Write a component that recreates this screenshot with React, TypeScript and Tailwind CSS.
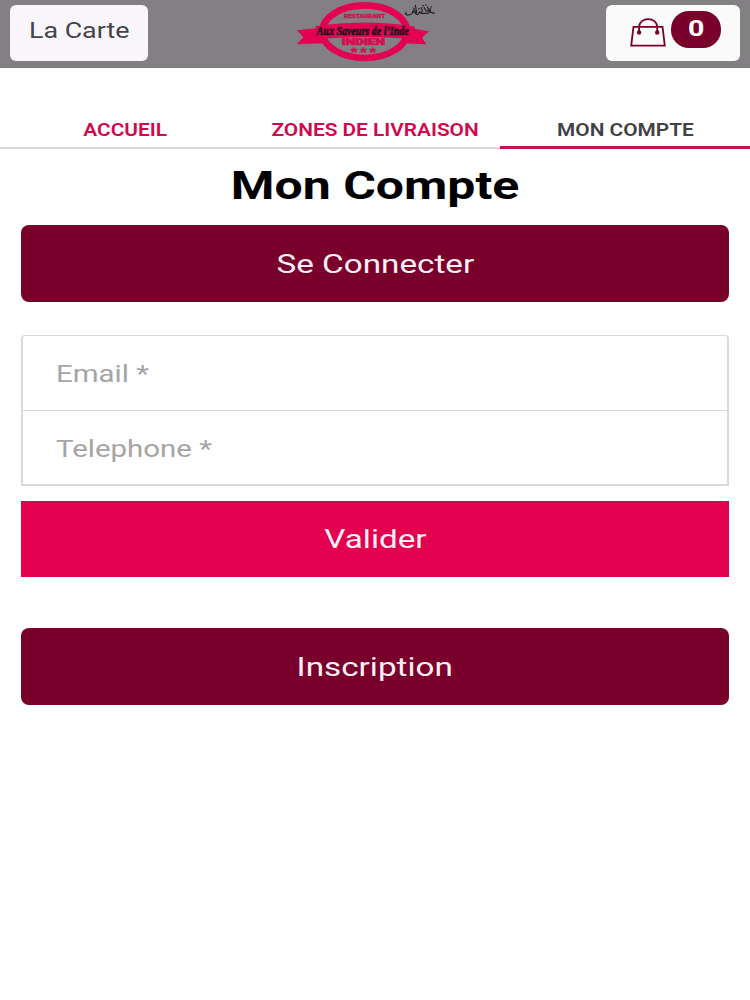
const tabs = [
  { label: "ACCUEIL", active: false },
  { label: "ZONES DE LIVRAISON", active: false },
  { label: "MON COMPTE", active: true },
];

function Logo() {
  return (
    <svg viewBox="0 0 480 204" className="h-[68px] w-[160px]" aria-label="Aux Saveurs de l'Inde">
      <ellipse cx="239" cy="95" rx="127" ry="79" fill="none" stroke="#e3024f" strokeWidth="20" />
      <path d="M36 91 L100 84 L108 112 L120 130 L35 133 L55 112 Z" fill="#e3024f" />
      <path d="M432 94 L374 84 L372 112 L358 130 L424 133 L411 113 Z" fill="#e3024f" />
      <path d="M92 78 Q240 56 390 80 L378 116 Q240 106 98 117 Z" fill="#e3024f" />
      <text x="177" y="55" textLength="123" lengthAdjust="spacingAndGlyphs" fill="#c91650" stroke="#c91650" fontSize="15" fontWeight="900" fontFamily="Roboto, sans-serif">RESTAURANT</text>
      <text x="170" y="136" textLength="130" lengthAdjust="spacingAndGlyphs" fill="#d90d50" stroke="#d90d50" strokeWidth="2" fontSize="25" fontWeight="900" fontFamily="Roboto, sans-serif">INDIEN</text>
      <g fill="#d90d50">
        <path d="M207 140l4 6 8 1-5 5 1 7-8-3-8 3 1-7-5-5 8-1z" />
        <path d="M235 140l4 6 8 1-5 5 1 7-8-3-8 3 1-7-5-5 8-1z" />
        <path d="M263 140l4 6 8 1-5 5 1 7-8-3-8 3 1-7-5-5 8-1z" />
      </g>
      <text x="95" y="104" textLength="276" lengthAdjust="spacingAndGlyphs" fill="#21101a" stroke="#21101a" strokeWidth="1.5" fontSize="35" fontStyle="italic" fontWeight="700" fontFamily="'Liberation Serif', serif">Aux Saveurs de l’Inde</text>
      <g fill="none" stroke="#242024" strokeWidth="3.5" strokeLinecap="round">
        <path d="M363 37 q-4 9 9 8 q14 -2 11 -14 q6 12 12 5 l-4 -20" />
        <path d="M386 24 l8 19 q8 2 9 -7 q6 5 9 -4 l-3 -9 M408 40 h20 q7 -1 4 -8 l-5 -11 M417 22 l5 10 q8 4 10 -4 M436 24 v12 l12 4" />
        <path d="M401 26 h2 M413 17 h2 M422 15 h2 M439 20 h1" />
      </g>
    </svg>
  );
}

function BagIcon() {
  return (
    <svg viewBox="0 0 108 88" className="h-[29px] w-[36px]" fill="none" stroke="#78002a" strokeWidth="5.5">
      <path d="M10 27 H98 L105 84 H3 Z" />
      <path d="M27 42 V28 C27 -5 82 -5 82 28 V42" />
      <circle cx="27" cy="44" r="4" fill="#78002a" />
      <circle cx="82" cy="44" r="4" fill="#78002a" />
    </svg>
  );
}

export default function App() {
  return (
    <div className="min-h-[1000px] w-full bg-white font-[Roboto,sans-serif]">
      <header className="flex h-[68px] bg-[#828083] px-[10px]">
        <button className="mt-[5px] flex h-[56px] w-[138px] justify-center rounded-md bg-[#f8f6fa] pt-[10px] text-[22px] leading-8 text-[#464348]">
          <span className="inline-block scale-x-[1.22] whitespace-nowrap">La Carte</span>
        </button>
        <div className="ml-[137px]">
          <Logo />
        </div>
        <button className="mt-[5px] ml-auto flex h-[56px] w-[134px] rounded-md bg-[#fafafa] pt-[6px] pl-[24px]">
          <span className="mt-[7px]">
            <BagIcon />
          </span>
          <span className="ml-[5px] flex h-[37px] w-[50px] items-center justify-center rounded-[18px] bg-[#78002a] text-[22px] font-bold text-white">
            <span className="inline-block -translate-y-px scale-x-[1.3]">0</span>
          </span>
        </button>
      </header>

      <nav className="mt-[42px] grid h-[39px] grid-cols-3">
        {tabs.map((tab) => (
          <a
            key={tab.label}
            href="#"
            className={
              tab.active
                ? "flex justify-center border-b-[3px] border-[#c4134f] pt-[8px] text-[17.5px] leading-6 font-semibold text-[#424143]"
                : "flex justify-center border-b-2 border-[#dad8db] pt-[8px] text-[17.5px] leading-6 font-semibold text-[#d0084e]"
            }
          >
            <span className="inline-block scale-x-[1.19] whitespace-nowrap">{tab.label}</span>
          </a>
        ))}
      </nav>

      <main className="px-[21px]">
        <h1 className="mt-[13px] flex h-12 justify-center text-[39.5px] leading-[48px] font-bold text-black">
          <span className="inline-block scale-x-[1.265]">Mon Compte</span>
        </h1>
        <button className="mt-[15px] flex h-[77px] w-full items-center justify-center rounded-lg bg-[#78002a] pt-[2px] text-[25px] text-[#fff0f6]">
          <span className="inline-block scale-x-[1.33]">Se Connecter</span>
        </button>

        <form className="mt-[33px]">
          <div className="rounded-t border-2 border-t border-b-0 border-[#dadadc]">
            <label className="flex h-[75px] items-center border-b border-[#dadadc] pt-[5px] pl-[33px] text-[23px] text-[#a5a4a7]">
              <span className="inline-block origin-left scale-x-[1.28]">Email *</span>
            </label>
            <label className="flex h-[75px] items-center border-b-2 border-[#dadadc] pt-[5px] pl-[33px] text-[23px] text-[#a5a4a7]">
              <span className="inline-block origin-left scale-x-[1.28]">Telephone *</span>
            </label>
          </div>
          <button type="button" className="mt-[15px] flex h-[76px] w-full items-center justify-center bg-[#e3004e] pt-[2px] text-[25px] text-[#fff0f6]">
            <span className="inline-block scale-x-[1.33]">Valider</span>
          </button>
        </form>

        <button className="mt-[51px] flex h-[77px] w-full items-center justify-center rounded-lg bg-[#78002a] pt-[2px] text-[25px] text-[#fff0f6]">
          <span className="inline-block scale-x-[1.33]">Inscription</span>
        </button>
      </main>
    </div>
  );
}
